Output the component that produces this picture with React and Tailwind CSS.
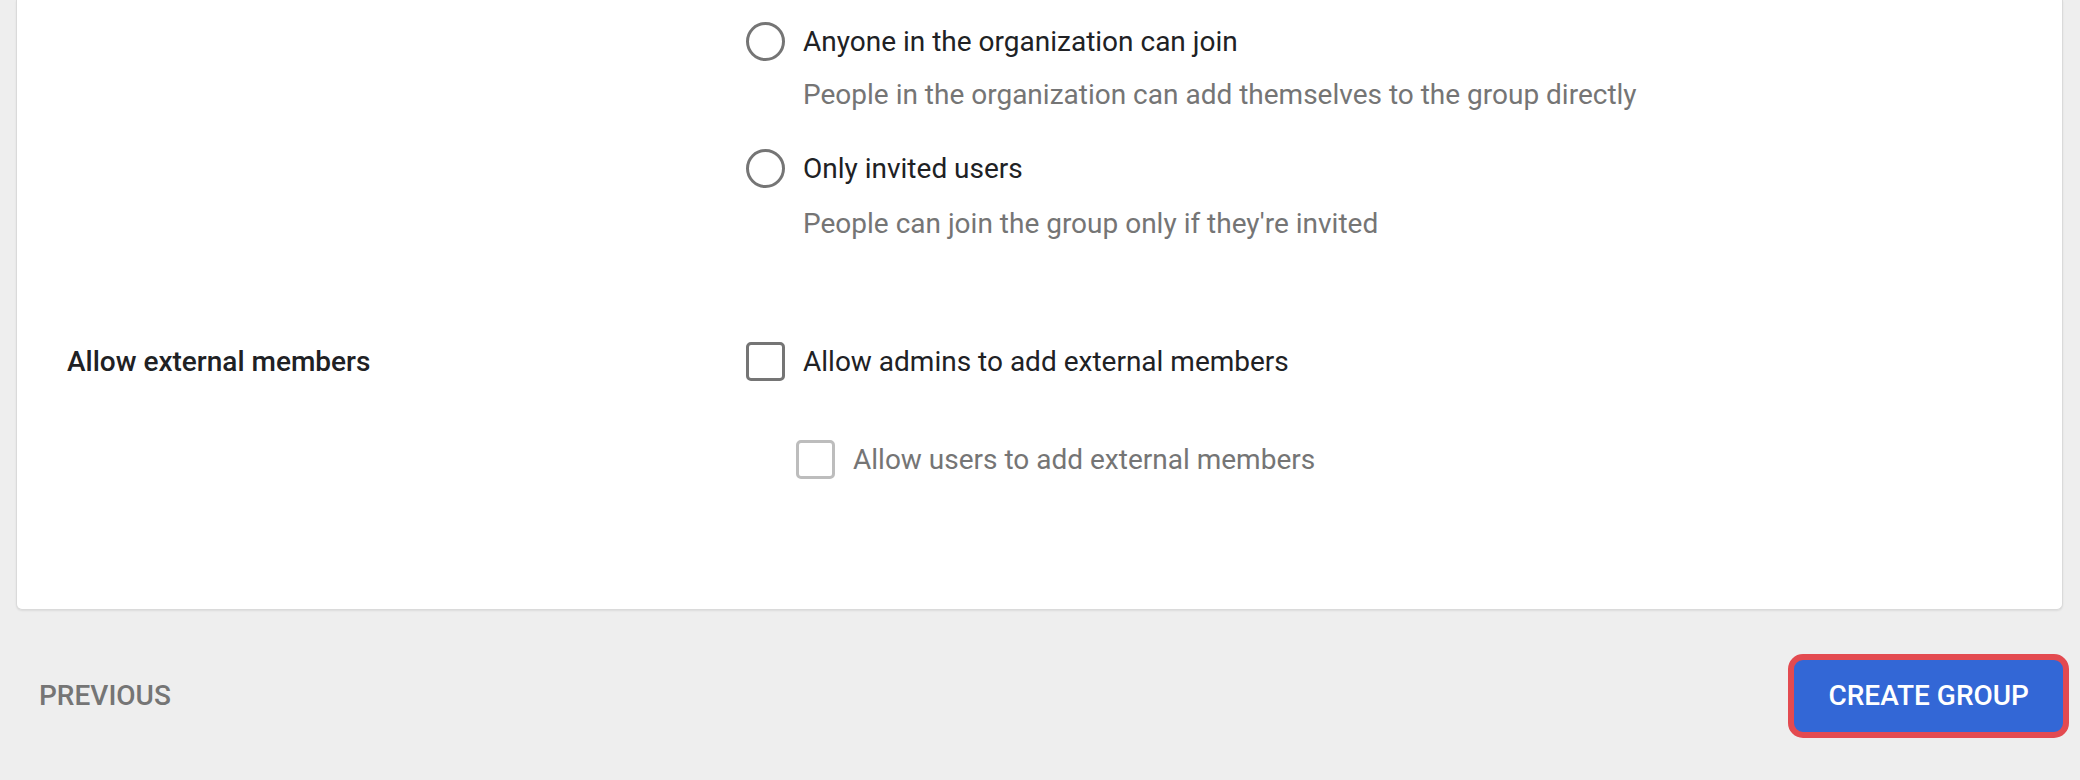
import { useState } from "react";

function Radio({ checked, onChange, label }) {
  return (
    <label className="flex items-center gap-[18px] cursor-pointer">
      <span className="w-[39px] h-[39px] rounded-full border-[3px] border-[#757575] flex items-center justify-center shrink-0">
        {checked && <span className="w-[19px] h-[19px] rounded-full bg-[#757575]" />}
      </span>
      <input type="radio" className="hidden" checked={checked} onChange={onChange} />
      <span className="text-[#202124]">{label}</span>
    </label>
  );
}

function Checkbox({ checked, onChange, label, disabled }) {
  return (
    <label className={`flex items-center gap-[18px] ${disabled ? "cursor-default" : "cursor-pointer"}`}>
      <span
        className={`w-[39px] h-[39px] rounded-[5px] border-[3px] shrink-0 ${
          disabled ? "border-[#bdbdbd]" : "border-[#757575]"
        }`}
      />
      <input type="checkbox" className="hidden" checked={checked} disabled={disabled} onChange={onChange} />
      <span className={disabled ? "text-[#757575]" : "text-[#202124]"}>{label}</span>
    </label>
  );
}

export default function App() {
  const [joinMode, setJoinMode] = useState("");
  const [adminsExternal, setAdminsExternal] = useState(false);

  return (
    <div
      className="min-h-[780px] bg-[#eeeeee] text-[28px] leading-[38px]"
      style={{ fontFamily: "Roboto, 'Noto Sans', sans-serif" }}
    >
      {/* Settings card */}
      <div className="ml-4 mr-[17px] bg-white border border-t-0 border-[#dadada] rounded-b-[6px] shadow-[0_1px_2px_rgba(0,0,0,0.08)] pl-[50px] pb-[130px]">
        <div className="grid grid-cols-[679px_1fr]">
          <div />
          <div className="pt-[22px]">
            <Radio
              label="Anyone in the organization can join"
              checked={joinMode === "anyone"}
              onChange={() => setJoinMode("anyone")}
            />
            <p className="mt-[15px] pl-[57px] text-[#757575]">
              People in the organization can add themselves to the group directly
            </p>
            <div className="mt-[35px]">
              <Radio
                label="Only invited users"
                checked={joinMode === "invited"}
                onChange={() => setJoinMode("invited")}
              />
            </div>
            <p className="mt-[17px] pl-[57px] text-[#757575]">
              People can join the group only if they're invited
            </p>
          </div>

          <div className="pt-[99px]">
            <span className="h-[39px] flex items-center font-medium text-[#202124]">Allow external members</span>
          </div>
          <div className="pt-[99px]">
            <Checkbox
              label="Allow admins to add external members"
              checked={adminsExternal}
              onChange={() => setAdminsExternal(!adminsExternal)}
            />
            <div className="mt-[59px] pl-[50px]">
              <Checkbox label="Allow users to add external members" disabled checked={false} />
            </div>
          </div>
        </div>
      </div>

      {/* Footer actions */}
      <div className="flex items-center justify-between pl-[39px] pr-[11px] pt-11">
        <button className="font-medium uppercase text-[#757575]">Previous</button>
        <button className="h-[84px] px-[34px] rounded-[15px] border-[6px] border-[#e34a50] bg-[#3367d6] text-white font-medium uppercase">
          Create group
        </button>
      </div>
    </div>
  );
}
